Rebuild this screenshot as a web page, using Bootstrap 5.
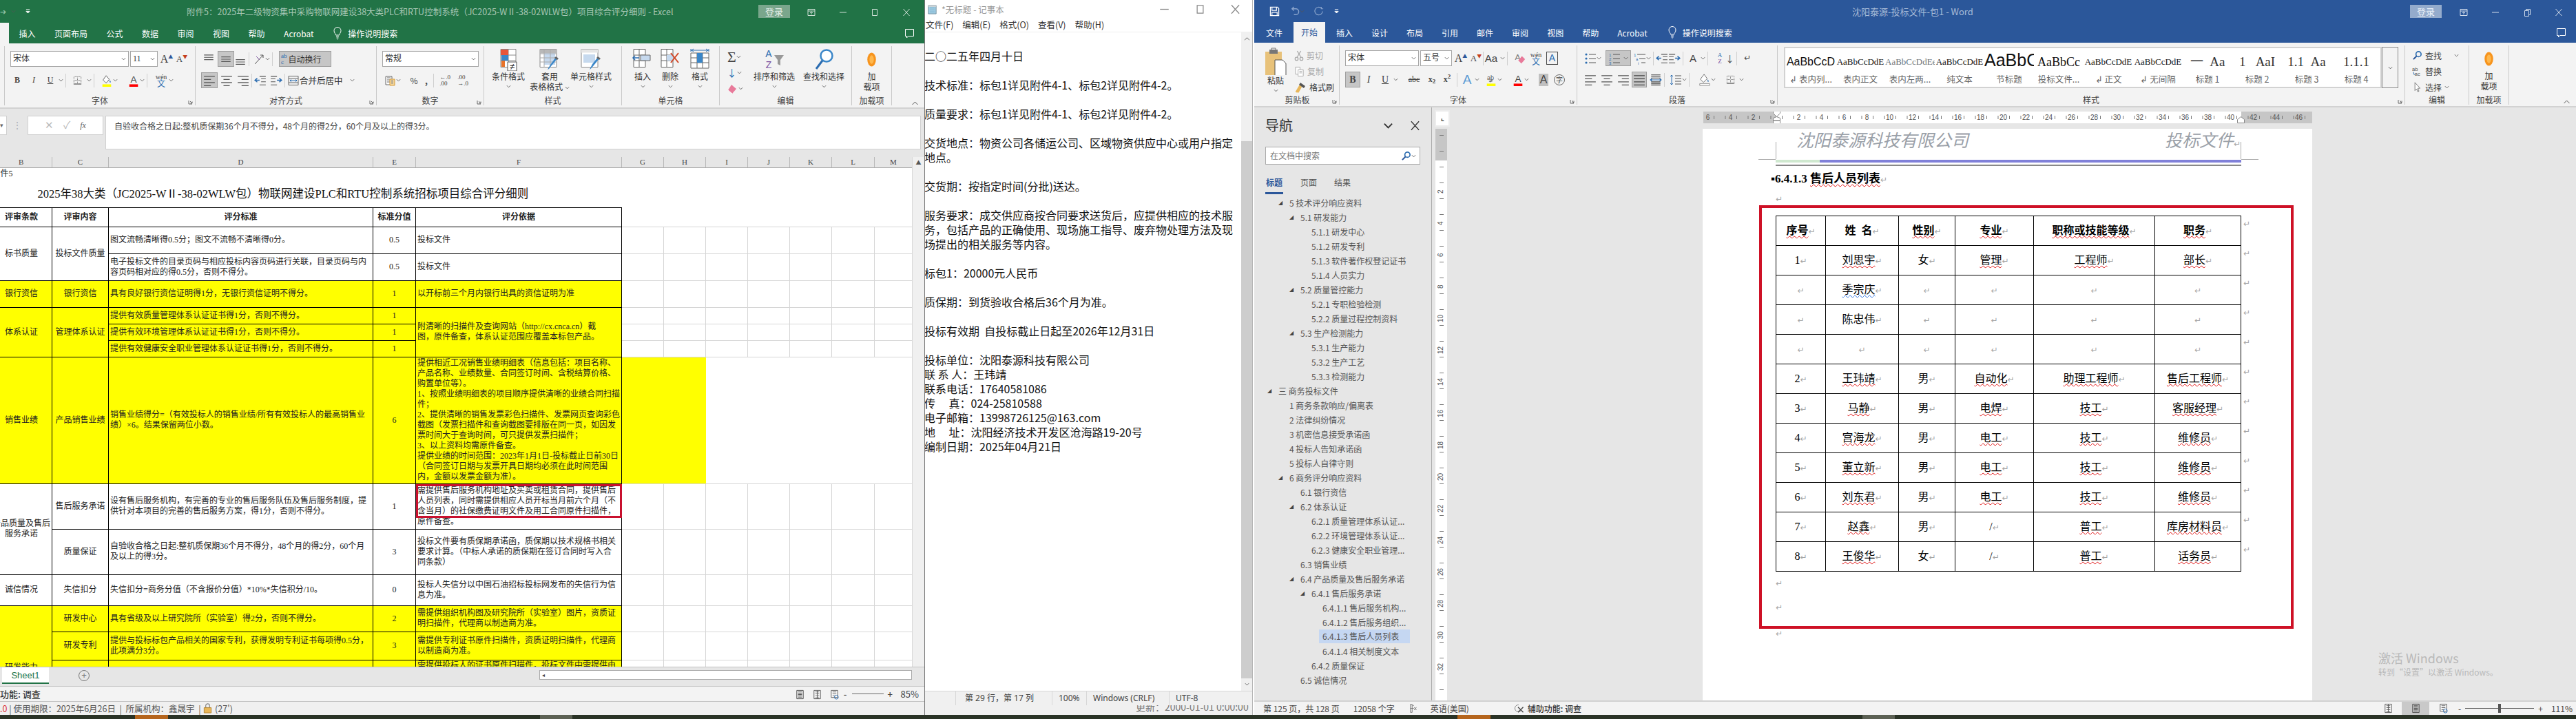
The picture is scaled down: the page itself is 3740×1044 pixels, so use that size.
<!doctype html>
<html lang="zh-CN">
<head>
<meta charset="utf-8">
<title>Excel, Notepad and Word</title>
<link href="https://cdn.jsdelivr.net/npm/bootstrap@5.3.0/dist/css/bootstrap.min.css" rel="stylesheet">
<style>
html,body{margin:0;width:3740px;height:1044px;overflow:hidden;background:#fff}
body{font-family:"Noto Sans CJK SC","Noto Sans",sans-serif;font-size:12px;line-height:15px;color:#444}
.screen{width:3740px;height:1044px;position:relative}
.wins{height:1038px}
.tbar{height:6px;background:#2a3326}
.tb-o{background:#b5651d;width:48px}.tb-g{background:#5c6154;width:47px}
.m196{margin-left:196px}.m540{margin-left:540px}.m1285{margin-left:1285px}
.xl{width:1342px;flex:none;overflow:hidden}
.np{width:477px;flex:none;border-left:1px solid #777;border-right:1px solid #b5b5b5;background:#f0f0f0}
.wd{width:1919px;flex:none;margin-left:2px;overflow:hidden;background:#e6e6e6}
.xttl,.xtab{background:#217346;color:#fff}
.wttl,.wtab{background:#2b579a;color:#fff}
.xttl{height:33px}.xtab{height:30px}
.wttl{height:32px}.wtab{height:30px}
.ttl-t{font-size:12.5px;white-space:nowrap}
.xttl .ttl-t{color:#a7c7b5;width:702px;margin-left:227px}
.wttl .ttl-t{color:#a8bcd8;width:178px;margin-left:745px;font-size:13px}
.login{width:46px;height:19px;line-height:19px;text-align:center;font-size:13px}
.xttl .login{background:#7aa68c;color:#e6f0ea;margin-left:128px}
.wttl .login{background:#94abcc;color:#eef3fa;margin-left:632px}
.ctrl{width:46px;text-align:center}
.ctrl svg{width:12px;height:12px;color:#cfe0d6}
.wttl .ctrl svg{color:#d4deec}
.xarr{color:#8fc1a5;width:8px;font-size:11px;line-height:11px}
.xcr{color:#8fc1a5}.wcr{color:#8aa4cc}
.xt-row{gap:27.5px;height:100%;align-items:center;padding-left:13px}
.xon{width:13px;height:100%;background:#f3f3f3;margin-right:-13px;margin-left:-13px}
.wt-row{gap:27px;height:100%;align-items:center;padding-left:17px}
.won{background:#f3f3f3;color:#2b579a;margin:0 -11px;padding:0 11px;height:100%;line-height:30px}
.bulb{width:14px;height:20px}
.cmt{width:15px;height:15px;color:#fff}
.cmt-x{margin-left:auto;margin-right:14px}
.rb{height:95px;background:#f3f3f3;padding-top:4px;border-bottom:2px solid #d2d2d2;flex:none}
.wrb{height:94px}
.rg{display:flex;flex-direction:column;border-right:1px solid #c9c9c9;height:86px;flex:none}
.rb-b{flex:1;padding-top:7px;min-height:0}
.rb-t{padding-top:3px}
.rb-c{flex:1;padding-top:3px;min-height:0;display:flex}
.rb-l{height:14px;line-height:14px;text-align:center;color:#444;position:relative}
.rw{display:flex;align-items:center;height:23px}
.rw+.rw{margin-top:8px}
.box{height:23px;border:1px solid #a6a6a6;background:#fff;display:flex;align-items:center;justify-content:space-between;padding:0 3px;color:#333}
.wrap-on{padding:0 2px;gap:2px;justify-content:flex-start}
.ib{display:flex;align-items:center;justify-content:center;height:23px;color:#444;flex:none}
.hl{background:#c6c6c6;border:1px solid #9e9e9e}
.cr{width:7px;height:7px;color:#555;flex:none}
.i14{width:15px;height:15px;flex:none}.i16{width:18px;height:18px;flex:none}.i16n{width:14px;height:18px;flex:none}
.i32{width:34px;height:33px;flex:none}
.bb{display:flex;flex-direction:column;align-items:center;text-align:center;line-height:15px;color:#333;flex:none;white-space:nowrap}
.bb svg.cr{margin-top:4px}
.bb svg.cr0{margin-top:0}
.w7{width:7px}.w14{width:14px}.w16{width:16px}.w22{width:22px}.w24{width:24px}.w26{width:26px}.w30{width:30px}.w34{width:34px}.w37{width:37px}.w38{width:38px}.w40{width:40px}.w46{width:46px}.w60{width:60px}.w72{width:72px}.w76{width:76px}.w107{width:107px}.w140{width:140px}.w172{width:172px}
.ml2{margin-left:2px}.ml3{margin-left:3px}.ml4{margin-left:4px}.ml5{margin-left:5px}.ml6{margin-left:6px}.ml7{margin-left:7px}.ml8{margin-left:8px}.ml9{margin-left:9px}.ml10{margin-left:10px}.ml12{margin-left:12px}.ml13{margin-left:13px}.ml14{margin-left:14px}.ml18{margin-left:18px}.ml19{margin-left:19px}.ml20{margin-left:20px}.ml22{margin-left:22px}.ml66{margin-left:66px}
.vs{width:1px;height:20px;background:#cfcfcf;flex:none;margin:0 3px}
.serif{font-family:"Liberation Serif","Noto Sans CJK SC",serif}
.biga{font-family:"Liberation Serif",serif;font-size:16px;color:#444;line-height:20px}
.sma{font-family:"Liberation Serif",serif;font-size:13px;color:#444;line-height:20px}
.tri{color:#2b579a;font-size:7px;line-height:8px;align-self:flex-start;margin-top:4px}
.triv{color:#c43e1c}
.launch{position:absolute;right:2px;bottom:1px;width:8px;height:8px;color:#666}
.stk10{font-size:10px;line-height:10px;flex-direction:column}
.stk9{font-size:9px;line-height:9px;flex-direction:column}
.wz{color:#2b6cb0;font-size:12px}
.abc9{font-size:9px;line-height:9px;color:#2b6cb0}
.sg{font-size:22px;height:24px;font-family:"Liberation Serif",serif}
.dnb{color:#2b6cb0;font-size:14px}
.h33{height:33px}
.sa15{font-size:15px;font-family:"Liberation Sans",sans-serif}
.sa19{font-size:19px;color:#5b9bd5;font-family:"Liberation Sans",sans-serif}
.f14{font-size:14px}
.abox{width:17px;height:19px;border:1px solid #444;font-size:14px;font-family:"Liberation Sans",sans-serif;color:#2b6cb0}
.ga{background:#c0c0c0;width:14px;font-size:16px;height:18px;font-family:"Liberation Sans",sans-serif}
.zi{width:16px;height:16px;border:1px solid #666;border-radius:50%;font-size:10px}
.blu{color:#2b6cb0}.pur{color:#7a4fa0}
.dj{font-family:"DejaVu Sans",sans-serif}
.ar13{color:#444;font-size:13px}
.mute{color:#aaa}.dark{color:#333}
.psti{width:32px;height:46px}.pstl{margin-top:-6px;background:#f3f3f3;width:38px}
.xg0{width:7px}.xg1{width:277px}.xg2{width:263px}.xg3{width:156px}.xg4{width:200px}.xg5{width:142px}.xg6{width:192px}.xg7{width:58px}
.wg0{width:2px;border:0}.wg1{width:122px}.wg2{width:345px}.wg3{width:291px}.wg4{width:911px}.wg5{width:93px}.wg6{width:58px}
.coll{margin-left:auto;margin-right:8px;align-self:flex-end;margin-bottom:2px;width:11px;height:8px;color:#555}
.fbar{height:70px;background:#e6e6e6;padding-top:10px;flex:none}
.nmb{width:10px;height:28px;background:#fff;border:1px solid #d0d0d0;border-left:0;font-size:9px;color:#666;line-height:26px}
.fx3{width:110px;height:28px;background:#fff;border:1px solid #d0d0d0;color:#bbb;font-size:15px;gap:14px;font-family:"Liberation Serif",serif}
.fxi{color:#666;font-size:12px}
.fin{width:1184px;height:49px;background:#fff;border:1px solid #d0d0d0;margin-left:3px;padding:6px 12px;color:#444}
.dots{width:30px;color:#aaa;text-align:center;line-height:26px;flex:none}
.sheet{height:740px;flex:none;position:relative}
.grid{width:1324px;height:740px;overflow:hidden;position:relative;flex:none}
.gt{table-layout:fixed;width:1338px;margin-left:-14px;font-family:"Liberation Serif","Noto Sans CJK SC",serif;font-size:12px;line-height:15px;color:#222}
.gt td,.gt th{padding:0 2px;white-space:nowrap;overflow:hidden;font-weight:400}
.c89{width:89px}.c82{width:82px}.c384{width:384px}.c62{width:62px}.c299{width:299px}.c61{width:61px}.c55{width:55px}
.ch th{height:15px;background:#e6e6e6;text-align:center;border-right:1px solid #b8b8b8;border-bottom:1px solid #aaa;font-family:"Liberation Serif",serif;font-size:11px;line-height:14px;color:#444}
.bd td{border:1px solid #000;vertical-align:middle}
.bd td.g{border:0;border-top:1px solid #d6d6d6;border-bottom:1px solid #d6d6d6;border-right:1px solid #d6d6d6;background:#fff}
.bd td.z{border:0;background:#fff}
.bd td.gy{border:0;background:#ff0}
.ctr{text-align:center}
.yc{background:#ff0}
.hd td{font-weight:700;text-align:center}
.h19{height:19px}.h39{height:39px}.h28{height:28px}.h45{height:45px}.h24{height:24px}.h184{height:184px}.h66{height:66px}.h38{height:38px}.h41{height:41px}.h56{height:56px}
.ttlc{font-size:16.5px;padding-left:68px!important;color:#111}
.redx{position:absolute;left:604px;top:475px;width:299px;height:49px;border:3px solid #c8102e;z-index:2}
.vsb{width:18px;background:#f0f0f0;border-left:1px solid #d8d8d8;flex:none;text-align:center;color:#555;font-size:8px}
.stabs{height:28px;background:#e6e6e6;border-top:1px solid #c2c2c2;flex:none}
.sh1{width:68px;margin-left:3px;background:#fff;color:#217346;text-align:center;font-size:13px;height:24px;line-height:23px;border-bottom:2px solid #217346;font-family:"Liberation Sans",sans-serif}
.plus{width:16px;height:16px;border:1px solid #777;border-radius:50%;margin-left:43px;color:#777;font-size:13px;line-height:13px;text-align:center;font-family:"Liberation Sans",sans-serif}
.hs{width:541px;height:14px;border:1px solid #aaa;background:#fff;margin-left:auto;margin-right:18px;font-size:8px;line-height:12px;color:#444;padding-left:3px}
.xst{height:22px;background:#f3f3f3;border-top:1px solid #c2c2c2;font-size:13px;flex:none;line-height:20px;color:#333;font-weight:500}
.xst2{height:20px;background:#f0f0f0;border-top:1px solid #c2c2c2;flex:none;line-height:18px;font-size:12.5px;color:#555;white-space:pre}
.red{color:#d33}
.vi{width:25px;text-align:center;color:#555}
.slid{width:46px;height:1px;background:#666;position:relative;margin:0 6px}
.pct{margin:0 8px 0 12px;font-weight:400;color:#444}
.npt{height:26px;background:#fff;color:#999;font-size:12.5px;flex:none}
.npi{margin:0 6px 0 3px}
.npm{height:21px;background:#fff;color:#333;flex:none;padding-left:1px;gap:13px;font-size:12.5px;border-bottom:1px solid #f0f0f0;line-height:20px}
.npctl{margin-left:auto;width:135px;color:#888;padding-right:17px}
.npb{flex:1;min-height:0;background:#fff}
.npx{width:459px;flex:none;overflow:hidden}
.npx pre{margin:3px 0 0 -1px;padding:0;font-family:"Noto Sans CJK SC","Noto Sans",sans-serif;font-size:16px;line-height:21px;color:#111;overflow:hidden;white-space:pre}
.nsb{width:16px;background:#f0f0f0;flex:none}
.nsb-u{height:158px;text-align:center;padding-top:6px}
.nsb-t{flex:1;background:#cdcdcd}
.nsb-d{height:18px;text-align:center;padding-top:5px}
.nsb svg{width:9px;height:7px;color:#555;display:block;margin:0 auto}
.nps{height:21px;background:#f0f0f0;border-top:1px solid #d7d7d7;flex:none;color:#444;line-height:20px}
.nps>span{height:100%;border-left:1px solid #d7d7d7;padding-left:9px;font-family:"Noto Sans","Noto Sans CJK SC",sans-serif}
.n1{margin-left:44px;width:140px;padding-left:13px!important}.n2{width:50px}.n3{width:120px}.n4{width:100px}
.npu{height:14px;overflow:hidden;background:#f0f0f0;color:#777;font-size:14px;line-height:14px;white-space:pre;padding-left:306px}
.npu span{display:block;margin-top:-5px}
.wmain{flex:1;min-height:0}
.pane{width:258px;flex:none;background:#e6e6e6;border-right:1px solid #a9a9a9;padding-left:16px;overflow:hidden}
.ptitle{height:34px;font-size:20px;line-height:34px;color:#333;padding-top:9px;box-sizing:content-box;width:225px}
.psearch{width:225px;height:26px;border:1px solid #aaa;background:#fff;margin-top:14px;padding:0 5px 0 6px;color:#777;line-height:24px}
.ptabs{gap:25px;margin-top:16px;height:25px;color:#555;font-size:12px;line-height:19px}
.pon{color:#2b579a;font-weight:700;border-bottom:3px solid #2b579a;height:27px;padding:0 1px}
.tree{margin:4px 0 0 -16px;color:#555;white-space:nowrap}
.tn{height:21px;line-height:21px;display:flex}
.tg{width:16px;flex:none;font-size:8px;color:#444;font-family:"DejaVu Sans",sans-serif}
.l0{padding-left:19px}.l1{padding-left:35px}.l2{padding-left:51px}.l3{padding-left:67px}.l4{padding-left:83px}
.nsel{background:#c5d7f2;width:132px;margin-left:-5px;padding-left:5px;height:20px;line-height:20px}
.dmain{flex:1;min-width:0;display:flex;flex-direction:column}
.rstrip{height:31px;flex:none;padding-top:4px}
.cbox{width:22px;height:24px;margin-left:4px;border:2px solid #ececec;background:#fff;color:#444;font-size:10px;line-height:18px;text-align:center;font-weight:700;flex:none}
.hrul{width:884px;height:17px;margin-left:368px;margin-top:2px;overflow:hidden;display:flex;flex:none;position:relative;font-family:"Liberation Sans",sans-serif;font-size:10px;line-height:17px;color:#555;
 background:linear-gradient(90deg,#777 1px,transparent 1px) 15px 6px/16.5px 5px repeat-x,linear-gradient(90deg,#c6c6c6 107px,#fff 107px,#fff 781px,#c6c6c6 781px)}
.hrul span{width:33px;flex:none;text-align:center}
.hrul span:first-of-type{margin-left:-43px}
.indm{position:absolute;left:101px;top:-1px;width:11px;height:19px;color:#888;z-index:2}
.indr{position:absolute;left:775px;top:7px;width:11px;height:10px;color:#888;z-index:2}
.dbody{flex:1;min-height:0}
.vrul{width:17px;margin-left:5px;flex:none;overflow:hidden;font-family:"Liberation Sans",sans-serif;font-size:10px;color:#555;padding-top:22px;
 background:linear-gradient(#777 1px,transparent 1px) 5.5px 9px/6px 23px repeat-y,linear-gradient(#c6c6c6 46px,#fff 46px)}
.vrul span{display:flex;align-items:center;justify-content:center;height:46px;writing-mode:vertical-rl;transform:rotate(180deg)}
.page{width:885px;margin-left:371px;background:#fff;flex:none;overflow:hidden;padding-left:106px;padding-right:103px;font-family:"Liberation Serif","Noto Sans CJK SC",serif;color:#000}
.phd{height:44px;position:relative;display:flex;justify-content:space-between;padding:3px 0 0 30px;font-size:25px;line-height:30px;font-style:italic;font-weight:400;color:#9aa0a8;
 background:linear-gradient(#aaa,#aaa) 0 19px/1px 25px no-repeat,linear-gradient(#aaa,#aaa) 100% 19px/1px 25px no-repeat}
.phd::before,.phd::after{content:"";position:absolute;top:44px;height:1px;width:25px;background:#aaa}
.phd::before{left:-25px}.phd::after{right:-25px}
.phr{padding-right:1px}
.phb{height:4px;margin-top:1px;display:flex}
.phb i{display:block}.phb .g1{width:64px;background:#cfe8cf}.phb .g2{flex:1;background:#8080d8}
.phl{height:2px;background:#888;margin-top:3px}
.hh{font-size:17px;font-weight:700;line-height:24px;margin:7px 0 0 -7px;white-space:nowrap;font-family:"Liberation Serif","Noto Sans CJK SC",serif}
.pm{font-family:"DejaVu Sans",sans-serif;font-style:normal;font-weight:400;color:#a6a6a6;font-size:12px}
.pml{height:12px;line-height:12px;margin-top:10px}
.rbx{width:776px;margin-left:-24px;height:615px;border:4px solid #ce1126;padding:11px 0 0 20px;margin-top:3px;flex:none}
.wt{table-layout:fixed;width:691px;font-size:16px;line-height:20px;text-align:center}
.wt td{height:43px;padding:0;border:1px solid #000;vertical-align:middle;white-space:nowrap;overflow:hidden}
.wt td.mk{border:0;text-align:left;vertical-align:top;padding:3px 0 0 3px;line-height:14px}
.wt tr.hb td:not(.mk){font-weight:700}
.d72{width:72px}.d106{width:106px}.d82{width:82px}.d114{width:114px}.d176{width:176px}.d125{width:125px}.d16{width:16px}
.sq{text-decoration:underline wavy #e01010 1px;text-underline-offset:2px}
.sb{text-decoration:underline wavy #2a6fe0 1px;text-underline-offset:2px}
.bl{height:35px;line-height:35px}
.lst{height:15px;line-height:15px}
.wst{height:21px;background:#f3f3f3;border-top:2px solid #d2d2d2;flex:none;line-height:19px;color:#444;white-space:nowrap}
.wacc{color:#333;font-weight:500}
.wpc{margin:0 5px 0 12px}
.wlm{position:absolute;left:3453px;top:944px;color:#b9b9b9;z-index:3;line-height:20px;white-space:nowrap}
.wlm b{display:block;font-weight:400;font-size:18px;line-height:22px}
.gal{width:868px;height:60px;margin:2px 0 0 9px;background:#fff;border:2px solid #d2d2d2;display:flex;overflow:hidden;padding-left:1px}
.gm{width:24px;height:60px;border:1px solid #8a8a8a;margin-top:2px;background:#f3f3f3;text-align:center;line-height:56px;flex:none}
.gi{width:72px;flex:none;text-align:center;overflow:hidden;white-space:nowrap}
.gs{height:34px;line-height:40px;font-family:"Liberation Sans",sans-serif;font-size:16px;color:#111;overflow:hidden}
.gl{height:22px;line-height:22px;color:#666;font-size:12.5px}
.s13{font-family:"Liberation Serif",serif;font-size:13px}
.s24{font-family:"Liberation Sans",sans-serif;font-size:25px;line-height:34px}
.s20{font-family:"Liberation Serif",serif;font-size:19px;color:#333}
.s18{font-family:"Liberation Serif",serif;font-size:18px}
.lb{color:#333;font-size:12.5px;white-space:nowrap}
.sld2{width:100px;height:1px;background:#555;position:relative;margin:0 6px}
.sld2 i{position:absolute;left:48px;top:-6px;width:4px;height:13px;background:#555}
.vsel{background:#c9c9c9;width:40px;height:19px;display:flex;align-items:center;justify-content:center}
</style>
</head>
<body>
<svg class="d-none" xmlns="http://www.w3.org/2000/svg">
<symbol id="cr" viewBox="0 0 8 8"><path d="M1 2.500 4 5.500 7 2.500" fill="none" stroke="currentColor" stroke-width="1"/></symbol>
<symbol id="up" viewBox="0 0 10 8"><path d="M1 6 5 2 9 6" fill="none" stroke="currentColor"/></symbol>
<symbol id="min" viewBox="0 0 12 12"><path d="M1 6h10" stroke="currentColor"/></symbol>
<symbol id="max" viewBox="0 0 12 12"><path d="M2.500 1.500h7v9h-7z" fill="none" stroke="currentColor"/></symbol>
<symbol id="rst" viewBox="0 0 12 12"><path d="M2.500 3.500h6v8h-6zM4.500 3.500v-2h6v8h-2" fill="none" stroke="currentColor"/></symbol>
<symbol id="cls" viewBox="0 0 12 12"><path d="M1.500 1 10.500 11M10.500 1 1.500 11" stroke="currentColor" fill="none"/></symbol>
<symbol id="opt" viewBox="0 0 12 12"><path d="M1 1.500h10v9H1zM1 4h10M6 9V5.500M4 7l2-2 2 2" fill="none" stroke="currentColor"/></symbol>
<symbol id="blb" viewBox="0 0 14 20"><path d="M4.500 13c0-2-2.500-3-2.500-6.500a5 5 0 0 1 10 0c0 3.500-2.500 4.500-2.500 6.500zM5 15h4M5.500 17h3M6.500 19h1" fill="none" stroke="#fff"/></symbol>
<symbol id="cmt" viewBox="0 0 15 15"><path d="M1.500 1.500h12v10h-8l-2 2.500v-2.500h-2z" fill="none" stroke="currentColor"/></symbol>
<symbol id="lc" viewBox="0 0 8 8"><path d="M1 2v5h5M3 3l3 3M6 3.500V6H3.500" fill="none" stroke="currentColor"/></symbol>
<symbol id="vt" viewBox="0 0 16 16"><path d="M2 2.500h12M2 5.500h12M2 8.500h12" stroke="#555"/></symbol>
<symbol id="vm" viewBox="0 0 16 16"><path d="M2 5h12M2 8h12M2 11h12" stroke="#555"/></symbol>
<symbol id="vb" viewBox="0 0 16 16"><path d="M2 8.500h12M2 11.500h12M2 14.500h12" stroke="#555"/></symbol>
<symbol id="al" viewBox="0 0 16 16"><path d="M1 2.500h14M1 6.500h9M1 10.500h14M1 14.500h9" stroke="#555"/></symbol>
<symbol id="ac" viewBox="0 0 16 16"><path d="M1 2.500h14M4 6.500h8M1 10.500h14M4 14.500h8" stroke="#555"/></symbol>
<symbol id="ar" viewBox="0 0 16 16"><path d="M1 2.500h14M6 6.500h9M1 10.500h14M6 14.500h9" stroke="#555"/></symbol>
<symbol id="aj" viewBox="0 0 16 16"><path d="M1 2.500h14M1 6.500h14M1 10.500h14M1 14.500h14" stroke="#444"/></symbol>
<symbol id="ad" viewBox="0 0 16 16"><path d="M2 1.500h12M2 3.500h12M2 5.500h12M2 10.500h12M2 12.500h12M2 14.500h12" stroke="#444"/><path d="M1 8h14M3 6.500 1 8l2 1.500M13 6.500 15 8l-2 1.500" stroke="#2b6cb0" fill="none"/></symbol>
<symbol id="od" viewBox="0 0 16 16"><path d="M7 2.500h8M9 5.500h6M9 9.500h6M7 13.500h8" stroke="#555"/><path d="M7 7.500H1M4 5 1 7.500 4 10" stroke="#2b6cb0" fill="none" stroke-width="1.300"/></symbol>
<symbol id="oi" viewBox="0 0 16 16"><path d="M1 2.500h8M1 5.500h6M1 9.500h6M1 13.500h8" stroke="#555"/><path d="M9 7.500h6M12 5l3 2.500L12 10" stroke="#2b6cb0" fill="none" stroke-width="1.300"/></symbol>
<symbol id="ori" viewBox="0 0 18 18"><path d="M3 16 15 3M11 3h4v4" stroke="#555" fill="none"/><path d="M5 5l5 5" stroke="#7a4fa0"/></symbol>
<symbol id="mrg" viewBox="0 0 18 18"><path d="M2 2.500h14v13H2zM2 6h14M2 12h14" fill="none" stroke="#666"/><path d="M4 9h10M6 7.500 4 9l2 1.500M12 7.500 14 9l-2 1.500" fill="none" stroke="#2b6cb0"/></symbol>
<symbol id="brd" viewBox="0 0 16 16"><path d="M2.500 2.500h11v11h-11zM8 2.500v11M2.500 8h11" fill="none" stroke="#666" stroke-dasharray="1 1"/><path d="M2 14h12" stroke="#555"/></symbol>
<symbol id="fil" viewBox="0 0 18 20"><path d="M8 2 3 9l5 5 5-6z" fill="#fff" stroke="#555"/><path d="M14 9c1 2 2 3 1 4s-2-1-1-4" fill="#2b6cb0"/><path d="M2 16h14v4H2z" fill="#ff0"/></symbol>
<symbol id="fca" viewBox="0 0 18 20"><text x="9" y="13" text-anchor="middle" font-family="Liberation Sans" font-size="15" fill="#444">A</text><path d="M2 16h14v4H2z" fill="#f00"/></symbol>
<symbol id="hla" viewBox="0 0 18 20"><text x="8" y="10" text-anchor="middle" font-family="Liberation Sans" font-size="10" fill="#555">ab</text><path d="M5 12l5-2 2 2-5 2z" fill="#777"/><path d="M2 16h14v4H2z" fill="#ff0"/></symbol>
<symbol id="acc" viewBox="0 0 18 18"><path d="M3 3h9v12H3zM5 5h5M5 8h5M5 11h5" fill="#fff" stroke="#666"/><path d="M9 7h7v9H9z" fill="#f8d89a" stroke="#d39a3a"/><path d="M11 9h3M11 11h3M11 13h3" stroke="#888"/></symbol>
<symbol id="cfm" viewBox="0 0 34 33"><path d="M6 1.500h22v26H6zM6 10h22M6 18h22M17 1.500v26" fill="#fff" stroke="#888"/><path d="M6 2h11v8H6z" fill="#e7563a"/><path d="M7 10h10v8H7z" fill="#3a86c8"/><path d="M7 18h5v9H7z" fill="#e8732a"/><path d="M16 20h13v13H16z" fill="#fff" stroke="#555"/><text x="22.500" y="31" text-anchor="middle" font-size="13" font-family="Liberation Sans" fill="#222">≠</text></symbol>
<symbol id="tfm" viewBox="0 0 34 33"><path d="M3 1.500h24v26H3z" fill="#fff" stroke="#888"/><path d="M3 1.500h24v6H3z" fill="#b8b8b8"/><path d="M9 7h16v17H9z" fill="#c6d9ee"/><path d="M3 8h24M3 14h24M3 20h24M9 1.500v26M18 1.500v26" fill="none" stroke="#aaa"/><path d="M29 14 20 25c-2 2-4 6-6 6l4-7 8-11z" fill="#3a86c8"/><path d="M26 12l4 3-2 2-4-3z" fill="#666"/></symbol>
<symbol id="csm" viewBox="0 0 34 33"><path d="M3 1.500h24v26H3z" fill="#fff" stroke="#888"/><path d="M3 1.500h24v5H3z" fill="#e6e6e6"/><path d="M6 9h17v12H6z" fill="#c6d9ee"/><path d="M30 14 21 25c-2 2-4 5-6 6l4-8 8-10z" fill="#3a86c8"/><path d="M27 12l4 3-2 2-4-3z" fill="#666"/></symbol>
<symbol id="cin" viewBox="0 0 34 33"><path d="M4 1.500h17v26H4zM4 10h17M4 18h17M12 1.500v26" fill="#fff" stroke="#666"/><path d="M14 10h14v8H14z" fill="#c6d9ee" stroke="#666"/><path d="M12 14H3M6 11 3 14l3 3" fill="none" stroke="#2b6cb0" stroke-width="1.500"/></symbol>
<symbol id="cdl" viewBox="0 0 34 33"><path d="M4 1.500h17v26H4zM4 10h17M4 18h17M12 1.500v26" fill="#fff" stroke="#666"/><path d="M12 10h9v8h-9z" fill="#c6d9ee"/><path d="M18 7l11 14M29 7 18 21" stroke="#d24726" stroke-width="2"/></symbol>
<symbol id="cft" viewBox="0 0 34 33"><path d="M4 7h26v22H4zM4 14h26M4 21h26M13 7v22M21 7v22" fill="#fff" stroke="#666"/><path d="M13 7h8v14h-8z" fill="#3a86c8"/><path d="M4 3h26M4 1v4M30 1v4M8 1 5 3l3 2M26 1l3 2-3 2" fill="none" stroke="#2b6cb0"/></symbol>
<symbol id="srt" viewBox="0 0 34 33"><text x="9" y="13" text-anchor="middle" font-family="Liberation Sans" font-size="14" fill="#2b6cb0">A</text><text x="9" y="29" text-anchor="middle" font-family="Liberation Sans" font-size="14" fill="#7a4fa0">Z</text><path d="M17 10h14l-5 7v8l-4-2v-6z" fill="#999"/></symbol>
<symbol id="fnd" viewBox="0 0 34 33"><circle cx="21" cy="11" r="8.500" fill="#fff" stroke="#3a86c8" stroke-width="2.500"/><path d="M15 18 6 30" stroke="#2b6cb0" stroke-width="3"/></symbol>
<symbol id="mag" viewBox="0 0 16 16"><circle cx="10" cy="6" r="4" fill="none" stroke="#2b6cb0" stroke-width="1.800"/><path d="M7 9 2 14" stroke="#2b579a" stroke-width="2.200"/></symbol>
<symbol id="dot" viewBox="0 0 12 20"><ellipse cx="6" cy="10" rx="5" ry="8" fill="#f7941d"/><ellipse cx="6" cy="10" rx="2.500" ry="5" fill="#ffb84d"/></symbol>
<symbol id="sav" viewBox="0 0 16 16"><path d="M1.500 1.500h11l2 2v11h-13zM4 1.500v5h7v-5M4 14.500v-5h8v5" fill="none" stroke="#fff" stroke-width="1.300"/></symbol>
<symbol id="und" viewBox="0 0 16 16"><path d="M4 4h6a4 4 0 0 1 0 9H7M7 1 4 4l3 3" fill="none" stroke="#8aa4cc" stroke-width="1.500"/></symbol>
<symbol id="red" viewBox="0 0 16 16"><path d="M11 3a6 6 0 1 0 2 5M11 1v3h3" fill="none" stroke="#8aa4cc" stroke-width="1.300"/></symbol>
<symbol id="qat" viewBox="0 0 8 10"><path d="M1 2h6M1 5l3 3 3-3z" stroke="#fff" fill="#fff"/></symbol>
<symbol id="pst" viewBox="0 0 32 46"><path d="M1 6h24v36H1z" fill="#e8c27a"/><path d="M7 3h12v6H7z" fill="#777"/><path d="M10 1h6v4h-6z" fill="none" stroke="#777"/><path d="M15 18h11l5 5v23H15z" fill="#fff" stroke="#555"/></symbol>
<symbol id="cut" viewBox="0 0 16 18"><path d="M5 1l6 10M11 1 5 11" stroke="#aaa" stroke-width="1.500"/><circle cx="4" cy="14" r="2.500" fill="none" stroke="#aaa" stroke-width="1.500"/><circle cx="12" cy="14" r="2.500" fill="none" stroke="#aaa" stroke-width="1.500"/></symbol>
<symbol id="cpy" viewBox="0 0 16 16"><path d="M2 1.500h7v11H2z" fill="#fff" stroke="#aaa"/><path d="M6 5.500h8v10H6zM8 8h4M8 10.500h4" fill="#fff" stroke="#aaa"/></symbol>
<symbol id="fmp" viewBox="0 0 18 18"><path d="M9 6 3 16M10 7l-5 9" stroke="#e8b75a" stroke-width="3"/><path d="M9 2l7 5-2 3-7-5z" fill="#555"/></symbol>
<symbol id="era" viewBox="0 0 18 18"><path d="M8 3l7 6-6 7-6-5z" fill="#e87a9a"/><path d="M3 11l6 5" stroke="#fff"/></symbol>
<symbol id="cla" viewBox="0 0 20 20"><text x="6" y="12" font-family="Liberation Sans" font-size="13" fill="#777" text-anchor="middle">A</text><path d="M13 6l5 5-6 7-5-5z" fill="#e87a9a"/></symbol>
<symbol id="lst1" viewBox="0 0 18 18"><circle cx="3" cy="3" r="1.600" fill="#2b6cb0"/><circle cx="3" cy="9" r="1.600" fill="#2b6cb0"/><circle cx="3" cy="15" r="1.600" fill="#2b6cb0"/><path d="M7 3h10M7 9h10M7 15h10" stroke="#555"/></symbol>
<symbol id="lst2" viewBox="0 0 18 18"><text x="1" y="6" font-size="6" font-family="Liberation Sans" fill="#2b6cb0">1</text><text x="1" y="12" font-size="6" font-family="Liberation Sans" fill="#2b6cb0">2</text><text x="1" y="18" font-size="6" font-family="Liberation Sans" fill="#2b6cb0">3</text><path d="M7 3h10M7 9h10M7 15h10" stroke="#555"/></symbol>
<symbol id="lst3" viewBox="0 0 18 18"><text x="0" y="6" font-size="6" font-family="Liberation Sans" fill="#2b6cb0">1</text><text x="3" y="12" font-size="6" font-family="Liberation Sans" fill="#2b6cb0">a</text><text x="6" y="18" font-size="6" font-family="Liberation Sans" fill="#2b6cb0">i</text><path d="M5 3h12M8 9h9M11 15h6" stroke="#555"/></symbol>
<symbol id="spc" viewBox="0 0 18 18"><path d="M3 2v14M1 4l2-2 2 2M1 14l2 2 2-2" fill="none" stroke="#2b6cb0"/><path d="M8 3h9M8 7h9M8 11h9M8 15h9" stroke="#555"/></symbol>
<symbol id="shd" viewBox="0 0 20 20"><path d="M9 1 3 9l5 5 6-6z" fill="#fff" stroke="#666"/><path d="M15 9c1 2 2 3 1 4s-2-1-1-4" fill="#2b6cb0"/><path d="M2 16h16v3H2z" fill="#fff" stroke="#888"/></symbol>
<symbol id="ptr" viewBox="0 0 12 18"><path d="M2 1v14l3-3 2 5 2-1-2-5h4z" fill="#fff" stroke="#666"/></symbol>
<symbol id="rp" viewBox="0 0 16 16"><text x="0" y="7" font-size="8" font-family="Liberation Sans" fill="#555">ab</text><text x="4" y="15" font-size="8" font-family="Liberation Sans" fill="#555">ac</text><path d="M2 9l1 4 3-1" fill="none" stroke="#2b6cb0"/></symbol>
<symbol id="vw1" viewBox="0 0 16 16"><path d="M3 1.500h10v13H3z" fill="#fff" stroke="#555"/><path d="M8 2v12M5 4h6M5 7h6M5 10h6M5 13h6" stroke="#555"/></symbol>
<symbol id="vw2" viewBox="0 0 16 16"><path d="M3 1.500h10v13H3zM5 4h6M5 6h6M5 8h6M5 10h6M5 12h6" fill="none" stroke="#444"/></symbol>
<symbol id="vw3" viewBox="0 0 16 16"><path d="M3 1.500h10v11H3zM5 4h6M5 7h6M5 10h4" fill="#fff" stroke="#555"/><circle cx="11" cy="12" r="3" fill="none" stroke="#2b6cb0"/></symbol>
<symbol id="lok" viewBox="0 0 14 16"><path d="M4 7V4a3 3 0 0 1 6 0v3" fill="none" stroke="#888" stroke-width="1.300"/><path d="M1.500 7h11v8h-11z" fill="#e8b75a" stroke="#b0812e"/></symbol>
<symbol id="npd" viewBox="0 0 16 16"><path d="M2 2h12v13H2z" fill="#a6d2e8" stroke="#6a8a9a"/><path d="M2 2h12v2H2z" fill="#d5d5d5"/><path d="M4 6h8M4 9h8M4 12h8" stroke="#6aa0bc"/></symbol>
<symbol id="hg" viewBox="0 0 11 19"><path d="M.5.500h10v3L5.500 8.500.5 3.500zM.5 14v-3.500l5-2 5 2V14zM.5 14h10v4.500H.500z" fill="#fff" stroke="currentColor"/></symbol>
<symbol id="rt" viewBox="0 0 11 10"><path d="M.5 4.500l5-4 5 4v5H.500z" fill="#fff" stroke="currentColor"/></symbol>
<symbol id="nob" viewBox="0 0 14 18"><path d="M2.500 2v14h3V2zM6.500 4h2M2.500 9l6 0" fill="none" stroke="#666"/><path d="M9 7l4 5M13 7l-4 5" stroke="#666"/></symbol>
<symbol id="acs" viewBox="0 0 18 18"><path d="M7 3a6 6 0 1 0 4 10" fill="none" stroke="#666"/><path d="M6 7l9 9M15 7l-9 9" stroke="#444" stroke-width="1.600"/></symbol>
</svg>

<div class="screen d-flex flex-column">
<div class="wins d-flex">

<section class="xl d-flex flex-column">
 <div class="xttl d-flex align-items-center">
  <span class="xarr">➔</span><svg class="cr xcr ml8"><use href="#cr"/></svg>
  <svg class="w7 ml14" viewBox="0 0 8 10"><use href="#qat"/></svg>
  <span class="ttl-t text-center">附件5：2025年二级物资集中采购物联网建设38大类PLC和RTU控制系统（JC2025-WⅡ-38-02WLW包）项目综合评分细则 - Excel</span>
  <span class="login">登录</span>
  <span class="ctrl ml8"><svg><use href="#opt"/></svg></span>
  <span class="ctrl"><svg><use href="#min"/></svg></span>
  <span class="ctrl"><svg><use href="#max"/></svg></span>
  <span class="ctrl"><svg><use href="#cls"/></svg></span>
 </div>
 <div class="xtab d-flex align-items-center">
  <div class="d-flex xt-row flex-grow-1">
   <span class="xon"></span><span>插入</span><span>页面布局</span><span>公式</span><span>数据</span><span>审阅</span><span>视图</span><span>帮助</span><span>Acrobat</span>
   <span class="d-flex align-items-center gap-2"><svg class="bulb"><use href="#blb"/></svg><span>操作说明搜索</span></span>
   <svg class="cmt cmt-x"><use href="#cmt"/></svg>
  </div>
 </div>
 <div class="rb d-flex">
  <div class="rg xg0"></div>
  <div class="rg xg1">
   <div class="rb-b">
    <div class="rw">
     <div class="box w172 ml8 serif"><span>宋体</span><svg class="cr"><use href="#cr"/></svg></div>
     <div class="box w40 serif ml2"><span>11</span><svg class="cr"><use href="#cr"/></svg></div>
     <span class="ib w14 ml6"><span class="biga">A</span><span class="tri">▲</span></span>
     <span class="ib w14 ml8"><span class="sma">A</span><span class="tri triv">▼</span></span>
    </div>
    <div class="rw">
     <span class="ib w24 ml6 fw-bold serif">B</span><span class="ib w24 fst-italic serif">I</span><span class="ib w24 text-decoration-underline serif">U</span><svg class="cr"><use href="#cr"/></svg>
     <span class="vs ml8"></span><svg class="i14 ml6"><use href="#brd"/></svg><svg class="cr ml6"><use href="#cr"/></svg>
     <span class="vs ml8"></span><svg class="i16 ml6"><use href="#fil"/></svg><svg class="cr"><use href="#cr"/></svg>
     <svg class="i16 ml14"><use href="#fca"/></svg><svg class="cr"><use href="#cr"/></svg>
     <span class="vs ml8"></span>
     <span class="ib w22 ml6 serif stk10"><span>wén</span><span class="wz">文</span></span><svg class="cr"><use href="#cr"/></svg>
    </div>
   </div>
   <div class="rb-l">字体<svg class="launch"><use href="#lc"/></svg></div>
  </div>
  <div class="rg xg2">
   <div class="rb-b">
    <div class="rw">
     <svg class="i16 ml10"><use href="#vt"/></svg>
     <span class="ib w24 hl ml4"><svg class="i16"><use href="#vm"/></svg></span>
     <svg class="i16"><use href="#vb"/></svg>
     <span class="vs ml8"></span>
     <svg class="i16 ml2"><use href="#ori"/></svg><svg class="cr"><use href="#cr"/></svg>
     <span class="vs ml8"></span>
     <div class="box w76 hl wrap-on ml6"><span class="serif abc9">ab<br>c</span><span>自动换行</span></div>
    </div>
    <div class="rw">
     <span class="ib w24 hl ml8"><svg class="i16"><use href="#al"/></svg></span>
     <svg class="i16 ml4"><use href="#ac"/></svg>
     <svg class="i16 ml6"><use href="#ar"/></svg>
     <span class="vs ml5"></span>
     <svg class="i16"><use href="#od"/></svg><svg class="i16 ml5"><use href="#oi"/></svg>
     <span class="vs"></span>
     <svg class="i16"><use href="#mrg"/></svg><span class="lb">合并后居中</span><svg class="cr ml10"><use href="#cr"/></svg>
    </div>
   </div>
   <div class="rb-l">对齐方式<svg class="launch"><use href="#lc"/></svg></div>
  </div>
  <div class="rg xg3">
   <div class="rb-b">
    <div class="rw"><div class="box w140 ml8 serif"><span>常规</span><svg class="cr"><use href="#cr"/></svg></div></div>
    <div class="rw">
     <svg class="i16 ml10"><use href="#acc"/></svg><svg class="cr"><use href="#cr"/></svg>
     <span class="ib w22 ml8">%</span><span class="ib w14 fw-bold">,</span>
     <span class="vs"></span>
     <span class="ib w26 serif stk9">←.0<br>.00</span>
     <span class="ib w26 serif stk9">.00<br>→.0</span>
    </div>
   </div>
   <div class="rb-l">数字<svg class="launch"><use href="#lc"/></svg></div>
  </div>
  <div class="rg xg4">
   <div class="rb-c">
    <div class="bb w60 ml5"><svg class="i32"><use href="#cfm"/></svg>条件格式<svg class="cr"><use href="#cr"/></svg></div>
    <div class="bb w60"><svg class="i32"><use href="#tfm"/></svg>套用<span>表格格式 <svg class="cr cr0"><use href="#cr"/></svg></span></div>
    <div class="bb w60"><svg class="i32"><use href="#csm"/></svg>单元格样式<svg class="cr"><use href="#cr"/></svg></div>
   </div>
   <div class="rb-l">样式</div>
  </div>
  <div class="rg xg5">
   <div class="rb-c">
    <div class="bb w40 ml10"><svg class="i32"><use href="#cin"/></svg>插入<svg class="cr"><use href="#cr"/></svg></div>
    <div class="bb w40"><svg class="i32"><use href="#cdl"/></svg>删除<svg class="cr"><use href="#cr"/></svg></div>
    <div class="bb w46"><svg class="i32"><use href="#cft"/></svg>格式<svg class="cr"><use href="#cr"/></svg></div>
   </div>
   <div class="rb-l">单元格</div>
  </div>
  <div class="rg xg6">
   <div class="rb-c">
    <div class="w34 d-flex flex-column align-items-center ml4">
     <span class="ib sg">Σ<svg class="cr"><use href="#cr"/></svg></span>
     <span class="ib dnb">↓<svg class="cr"><use href="#cr"/></svg></span>
     <span class="ib"><svg class="i16"><use href="#era"/></svg><svg class="cr"><use href="#cr"/></svg></span>
    </div>
    <div class="bb w72 ml5"><svg class="i32"><use href="#srt"/></svg>排序和筛选<svg class="cr"><use href="#cr"/></svg></div>
    <div class="bb w60 ml6"><svg class="i32"><use href="#fnd"/></svg>查找和选择<svg class="cr"><use href="#cr"/></svg></div>
   </div>
   <div class="rb-l">编辑</div>
  </div>
  <div class="rg xg7">
   <div class="rb-c justify-content-center"><div class="bb"><svg class="i14 h33" viewBox="0 0 12 20"><use href="#dot"/></svg>加<br>载项</div></div>
   <div class="rb-l">加载项</div>
  </div>
  <svg class="coll"><use href="#up"/></svg>
 </div>
 <div class="fbar d-flex">
  <div class="nmb">▾</div>
  <div class="dots">⋮</div>
  <div class="fx3 d-flex align-items-center justify-content-center"><span>✕</span><span>✓</span><span class="fst-italic fxi">fx</span></div>
  <div class="fin">自验收合格之日起:整机质保期36个月不得分，48个月的得2分，60个月及以上的得3分。</div>
 </div>
 <div class="sheet d-flex">
  <div class="grid">
   <table class="gt">
    <colgroup><col class="c89"><col class="c82"><col class="c384"><col class="c62"><col class="c299"><col class="c61"><col class="c61"><col class="c61"><col class="c61"><col class="c61"><col class="c62"><col class="c55"></colgroup>
    <tr class="ch"><th>B</th><th>C</th><th>D</th><th>E</th><th>F</th><th>G</th><th>H</th><th>I</th><th>J</th><th>K</th><th>L</th><th>M</th></tr>
    <tr class="h19"><td colspan="12">附件5</td></tr>
    <tr class="h39"><td colspan="12" class="ttlc">2025年38大类（JC2025-WⅡ-38-02WLW包）物联网建设PLC和RTU控制系统招标项目综合评分细则</td></tr>
    <tr class="h28 bd hd"><td>评审条款</td><td>评审内容</td><td>评分标准</td><td>标准分值</td><td>评分依据</td><td class="z" colspan="7"></td></tr>
    <tr class="h39 bd"><td rowspan="2" class="ctr">标书质量</td><td rowspan="2" class="ctr">投标文件质量</td><td>图文流畅清晰得0.5分；图文不流畅不清晰得0分。</td><td class="ctr">0.5</td><td>投标文件</td><td class="g"></td><td class="g"></td><td class="g"></td><td class="g"></td><td class="g"></td><td class="g"></td><td class="g"></td></tr>
    <tr class="h39 bd"><td>电子投标文件的目录页码与相应投标内容页码进行关联，目录页码与内<br>容页码相对应的得0.5分，否则不得分。</td><td class="ctr">0.5</td><td>投标文件</td><td class="g"></td><td class="g"></td><td class="g"></td><td class="g"></td><td class="g"></td><td class="g"></td><td class="g"></td></tr>
    <tr class="h39 bd"><td class="ctr yc">银行资信</td><td class="ctr yc">银行资信</td><td class="yc">具有良好银行资信证明得1分，无银行资信证明不得分。</td><td class="ctr yc">1</td><td class="yc">以开标前三个月内银行出具的资信证明为准</td><td class="g"></td><td class="g"></td><td class="g"></td><td class="g"></td><td class="g"></td><td class="g"></td><td class="g"></td></tr>
    <tr class="h24 bd"><td rowspan="3" class="ctr yc">体系认证</td><td rowspan="3" class="ctr yc">管理体系认证</td><td class="yc">提供有效质量管理体系认证证书得1分，否则不得分。</td><td class="ctr yc">1</td><td rowspan="3" class="yc">附清晰的扫描件及查询网站（http://cx.cnca.cn）截<br>图，原件备查，体系认证范围应覆盖本标包产品。</td><td class="g"></td><td class="g"></td><td class="g"></td><td class="g"></td><td class="g"></td><td class="g"></td><td class="g"></td></tr>
    <tr class="h24 bd"><td class="yc">提供有效环境管理体系认证证书得1分，否则不得分。</td><td class="ctr yc">1</td><td class="g"></td><td class="g"></td><td class="g"></td><td class="g"></td><td class="g"></td><td class="g"></td><td class="g"></td></tr>
    <tr class="h24 bd"><td class="yc">提供有效健康安全职业管理体系认证证书得1分，否则不得分。</td><td class="ctr yc">1</td><td class="g"></td><td class="g"></td><td class="g"></td><td class="g"></td><td class="g"></td><td class="g"></td><td class="g"></td></tr>
    <tr class="h184 bd"><td class="ctr yc">销售业绩</td><td class="ctr yc">产品销售业绩</td><td class="yc">销售业绩得分=（有效投标人的销售业绩/所有有效投标人的最高销售业<br>绩）×6。结果保留两位小数。</td><td class="ctr yc">6</td><td class="yc">提供相近工况销售业绩明细表（信息包括：项目名称、<br>产品名称、业绩数量、合同签订时间、含税结算价格、<br>购置单位等）。<br>1、按照业绩明细表的项目顺序提供清晰的业绩合同扫描<br>件；<br>2、提供清晰的销售发票彩色扫描件、发票网页查询彩色<br>截图（发票扫描件和查询截图要排版在同一页，如因发<br>票时间大于查询时间，可只提供发票扫描件；<br>3、以上资料均需原件备查。<br>提供业绩的时间范围：2023年1月1日-投标截止日前30日<br>（合同签订日期与发票开具日期均必须在此时间范围<br>内，金额以发票金额为准）。</td><td class="gy"></td><td class="gy"></td><td class="z" colspan="5"></td></tr>
    <tr class="h66 bd"><td rowspan="2" class="ctr">产品质量及售后<br>服务承诺</td><td class="ctr">售后服务承诺</td><td>设有售后服务机构，有完善的专业的售后服务队伍及售后服务制度，提<br>供针对本项目的完善的售后服务方案，得1分，否则不得分。</td><td class="ctr">1</td><td>需提供售后服务机构地址及买卖或租赁合同，提供售后<br>人员列表，同时需提供相应人员开标当月前六个月（不<br>含当月）的社保缴费证明文件及用工合同原件扫描件，<br>原件备查。</td><td class="g"></td><td class="g"></td><td class="g"></td><td class="g"></td><td class="g"></td><td class="g"></td><td class="g"></td></tr>
    <tr class="h66 bd"><td class="ctr">质量保证</td><td>自验收合格之日起:整机质保期36个月不得分，48个月的得2分，60个月<br>及以上的得3分。</td><td class="ctr">3</td><td>投标文件要有质保期承诺函，质保期以技术规格书相关<br>要求计算。（中标人承诺的质保期在签订合同时写入合<br>同条款）</td><td class="g"></td><td class="g"></td><td class="g"></td><td class="g"></td><td class="g"></td><td class="g"></td><td class="g"></td></tr>
    <tr class="h45 bd"><td class="ctr">诚信情况</td><td class="ctr">失信扣分</td><td>失信扣分=商务分值（不含报价分值）*10%*失信积分/10。</td><td class="ctr">0</td><td>投标人失信分以中国石油招标投标网发布的失信行为信<br>息为准。</td><td class="g"></td><td class="g"></td><td class="g"></td><td class="g"></td><td class="g"></td><td class="g"></td><td class="g"></td></tr>
    <tr class="h38 bd"><td rowspan="4" class="ctr yc">研发能力</td><td class="ctr yc">研发中心</td><td class="yc">具有省级及以上研究院所（实验室）得2分，否则不得分。</td><td class="ctr yc">2</td><td class="yc">需提供组织机构图及研究院所（实验室）图片，资质证<br>明扫描件，代理商以制造商为准。</td><td class="g"></td><td class="g"></td><td class="g"></td><td class="g"></td><td class="g"></td><td class="g"></td><td class="g"></td></tr>
    <tr class="h41 bd"><td class="ctr yc">研发专利</td><td class="yc">提供与投标标包产品相关的国家专利，获得发明专利证书每项得0.5分，<br>此项满分3分。</td><td class="ctr yc">3</td><td class="yc">需提供专利证书原件扫描件，资质证明扫描件，代理商<br>以制造商为准。</td><td class="g"></td><td class="g"></td><td class="g"></td><td class="g"></td><td class="g"></td><td class="g"></td><td class="g"></td></tr>
    <tr class="h45 bd"><td class="ctr yc"></td><td class="yc"></td><td class="ctr yc"></td><td class="yc">需提供投标人的证书原件扫描件，投标文件中需提供由<br>&nbsp;<br>&nbsp;</td><td class="g"></td><td class="g"></td><td class="g"></td><td class="g"></td><td class="g"></td><td class="g"></td><td class="g"></td></tr>
    <tr class="h56 bd"><td class="yc"></td><td class="yc"></td><td class="yc"></td><td class="yc"></td><td class="g"></td><td class="g"></td><td class="g"></td><td class="g"></td><td class="g"></td><td class="g"></td><td class="g"></td></tr>
   </table>
   <div class="redx"></div>
  </div>
  <div class="vsb">▲</div>
 </div>
 <div class="stabs d-flex align-items-start">
  <div class="sh1">Sheet1</div>
  <div class="plus mt-1">+</div>
  <div class="hs mt-1">◂</div>
 </div>
 <div class="xst d-flex align-items-center">
  <span>功能: 调查</span>
  <span class="ms-auto d-flex align-items-center">
   <span class="vi"><svg class="i14"><use href="#vw2"/></svg></span><span class="vi"><svg class="i14"><use href="#vw1"/></svg></span><span class="vi"><svg class="i14"><use href="#vw3"/></svg></span>
   <span class="ib w7">-</span><span class="slid"></span><span class="ib w7">+</span><span class="pct">85%</span>
  </span>
 </div>
 <div class="xst2 d-flex align-items-center"><span class="red">.0</span><span> | 使用期限：2025年6月26日  |  所属机构：鑫晟宇  | </span><svg class="i14"><use href="#lok"/></svg><span> (27')</span></div>
</section>

<section class="np d-flex flex-column">
 <div class="npt d-flex align-items-center">
  <svg class="i14 npi"><use href="#npd"/></svg><span>*无标题 - 记事本</span>
  <span class="npctl d-flex justify-content-between align-items-center ms-auto">
   <svg class="i14" viewBox="0 0 12 12"><use href="#min"/></svg><svg class="i14" viewBox="0 0 12 12"><use href="#max"/></svg><svg class="i14" viewBox="0 0 12 12"><use href="#cls"/></svg>
  </span>
 </div>
 <div class="npm d-flex"><span>文件(F)</span><span>编辑(E)</span><span>格式(O)</span><span>查看(V)</span><span>帮助(H)</span></div>
 <div class="npb d-flex">
  <div class="npx"><pre>

二○二五年四月十日

技术标准：标包1详见附件4-1、标包2详见附件4-2。

质量要求：标包1详见附件4-1、标包2详见附件4-2。

交货地点：物资公司各储运公司、区域物资供应中心或用户指定
地点。

交货期：按指定时间(分批)送达。

服务要求：成交供应商按合同要求送货后，应提供相应的技术服
务，包括产品的正确使用、现场施工指导、废弃物处理方法及现
场提出的相关服务等内容。

标包1：20000元人民币

质保期：到货验收合格后36个月为准。

投标有效期  自投标截止日起至2026年12月31日

投标单位：沈阳泰源科技有限公司
联 系 人：王玮靖
联系电话：17640581086
传　 真：024-25810588
电子邮箱：13998726125@163.com
地　 址：沈阳经济技术开发区沧海路19-20号
编制日期：2025年04月21日</pre></div>
  <div class="nsb d-flex flex-column">
   <div class="nsb-u"><svg viewBox="0 0 10 8"><use href="#up"/></svg></div>
   <div class="nsb-t"></div>
   <div class="nsb-d"><svg viewBox="0 0 8 8"><use href="#cr"/></svg></div>
  </div>
 </div>
 <div class="nps d-flex"><span class="n1">第 29 行，第 17 列</span><span class="n2">100%</span><span class="n3">Windows (CRLF)</span><span class="n4">UTF-8</span></div>
 <div class="npu"><span>更新：2000-01-01 0:00:00</span></div>
</section>

<section class="wd d-flex flex-column">
 <div class="wttl d-flex align-items-center">
  <svg class="i14 ml22"><use href="#sav"/></svg>
  <svg class="i14 ml14"><use href="#und"/></svg><svg class="cr wcr"><use href="#cr"/></svg>
  <svg class="i14 ml14"><use href="#red"/></svg>
  <svg class="w7 ml14" viewBox="0 0 8 10"><use href="#qat"/></svg>
  <span class="ttl-t">沈阳泰源-投标文件-包1 - Word</span>
  <span class="login">登录</span>
  <span class="ctrl ml9"><svg><use href="#opt"/></svg></span>
  <span class="ctrl"><svg><use href="#min"/></svg></span>
  <span class="ctrl"><svg><use href="#rst"/></svg></span>
  <span class="ctrl"><svg><use href="#cls"/></svg></span>
 </div>
 <div class="wtab d-flex align-items-center">
  <div class="d-flex wt-row flex-grow-1">
   <span>文件</span><span class="won">开始</span><span>插入</span><span>设计</span><span>布局</span><span>引用</span><span>邮件</span><span>审阅</span><span>视图</span><span>帮助</span><span>Acrobat</span>
   <span class="d-flex align-items-center gap-2 ml2"><svg class="bulb"><use href="#blb"/></svg><span>操作说明搜索</span></span>
   <svg class="cmt cmt-x"><use href="#cmt"/></svg>
  </div>
 </div>
 <div class="rb wrb d-flex">
  <div class="rg wg0"></div>
  <div class="rg wg1">
   <div class="rb-c">
    <div class="bb ml10 w38"><svg class="psti"><use href="#pst"/></svg><span class="pstl">粘贴</span><svg class="cr"><use href="#cr"/></svg></div>
    <div class="d-flex flex-column ml8">
     <span class="ib justify-content-start gap-1 mute"><svg class="i16n"><use href="#cut"/></svg><span>剪切</span></span>
     <span class="ib justify-content-start gap-1 mute"><svg class="i14"><use href="#cpy"/></svg><span>复制</span></span>
     <span class="ib justify-content-start gap-1 dark"><svg class="i16"><use href="#fmp"/></svg><span>格式刷</span></span>
    </div>
   </div>
   <div class="rb-l">剪贴板<svg class="launch"><use href="#lc"/></svg></div>
  </div>
  <div class="rg wg2">
   <div class="rb-b">
    <div class="rw">
     <div class="box w107 ml8 serif"><span>宋体</span><svg class="cr"><use href="#cr"/></svg></div>
     <div class="box w46 serif ml2"><span>五号</span><svg class="cr"><use href="#cr"/></svg></div>
     <span class="ib w14 ml6"><span class="biga">A</span><span class="tri">▲</span></span>
     <span class="ib w14 ml8"><span class="sma">A</span><span class="tri triv">▼</span></span>
     <span class="vs ml6"></span>
     <span class="ib w16 sa15">Aa</span><svg class="cr ml5"><use href="#cr"/></svg>
     <span class="vs"></span><svg class="i16 ml6"><use href="#cla"/></svg>
     <span class="ib w22 serif stk10 ml3"><span>wén</span><span class="wz">文</span></span>
     <span class="ib abox ml4">A</span>
    </div>
    <div class="rw">
     <span class="ib hl w22 fw-bold serif ml8 f14">B</span><span class="ib w24 fst-italic serif f14">I</span><span class="ib w24 text-decoration-underline serif f14">U</span><svg class="cr"><use href="#cr"/></svg>
     <span class="ib w30 serif text-decoration-line-through ml8">abc</span>
     <span class="ib w22 fw-bold serif">x<sub>2</sub></span><span class="ib w22 fw-bold serif">x<sup>2</sup></span>
     <span class="vs"></span>
     <span class="ib w22 sa19">A</span><svg class="cr"><use href="#cr"/></svg>
     <svg class="i16 ml8"><use href="#hla"/></svg><svg class="cr"><use href="#cr"/></svg>
     <svg class="i16 ml14"><use href="#fca"/></svg><svg class="cr"><use href="#cr"/></svg>
     <span class="ib ml14 ga">A</span>
     <span class="ib ml8 zi">字</span>
    </div>
   </div>
   <div class="rb-l">字体<svg class="launch"><use href="#lc"/></svg></div>
  </div>
  <div class="rg wg3">
   <div class="rb-b">
    <div class="rw">
     <svg class="i16 ml10"><use href="#lst1"/></svg><svg class="cr"><use href="#cr"/></svg>
     <span class="ib hl ml6 w37 gap-1"><svg class="i16"><use href="#lst2"/></svg><svg class="cr"><use href="#cr"/></svg></span>
     <svg class="i16 ml4"><use href="#lst3"/></svg><svg class="cr"><use href="#cr"/></svg>
     <span class="vs ml4"></span>
     <svg class="i16"><use href="#od"/></svg><svg class="i16"><use href="#oi"/></svg>
     <span class="vs"></span><span class="ib w22 sa15">A</span><svg class="cr"><use href="#cr"/></svg>
     <span class="vs ml8"></span>
     <span class="ib w16 serif stk9 ml6"><span class="blu">A</span><span class="pur">Z</span></span><span class="ar13">↓</span>
     <span class="vs ml8"></span><span class="dj ml7">↵</span>
    </div>
    <div class="rw">
     <svg class="i16 ml10"><use href="#al"/></svg><svg class="i16 ml6"><use href="#ac"/></svg><svg class="i16 ml6"><use href="#ar"/></svg>
     <span class="ib hl w22 ml3"><svg class="i16"><use href="#aj"/></svg></span>
     <svg class="i16 ml4"><use href="#ad"/></svg>
     <span class="vs ml4"></span>
     <svg class="i16 ml4"><use href="#spc"/></svg><svg class="cr"><use href="#cr"/></svg>
     <span class="vs ml8"></span>
     <svg class="i16 ml10"><use href="#shd"/></svg><svg class="cr"><use href="#cr"/></svg>
     <svg class="i14 ml14"><use href="#brd"/></svg><svg class="cr ml5"><use href="#cr"/></svg>
    </div>
   </div>
   <div class="rb-l">段落<svg class="launch"><use href="#lc"/></svg></div>
  </div>
  <div class="rg wg4">
   <div class="d-flex flex-grow-1">
    <div class="gal">
     <div class="gi"><div class="gs">AaBbCcD</div><div class="gl">↲ 表内列...</div></div>
     <div class="gi"><div class="gs s13">AaBbCcDdE</div><div class="gl">表内正文</div></div>
     <div class="gi"><div class="gs s13 text-secondary">AaBbCcDdEe</div><div class="gl">表内左两...</div></div>
     <div class="gi"><div class="gs s13">AaBbCcDdE</div><div class="gl">纯文本</div></div>
     <div class="gi"><div class="gs s24">AaBbC</div><div class="gl">节标题</div></div>
     <div class="gi"><div class="gs s18">AaBbCc</div><div class="gl">投标文件...</div></div>
     <div class="gi"><div class="gs s13">AaBbCcDdE</div><div class="gl">↲ 正文</div></div>
     <div class="gi"><div class="gs s13">AaBbCcDdE</div><div class="gl">↲ 无间隔</div></div>
     <div class="gi"><div class="gs s20">一&nbsp;&nbsp;Aa</div><div class="gl">标题 1</div></div>
     <div class="gi"><div class="gs s20">1&nbsp;&nbsp;&nbsp;AaI</div><div class="gl">标题 2</div></div>
     <div class="gi"><div class="gs s20">1.1&nbsp;&nbsp;Aa</div><div class="gl">标题 3</div></div>
     <div class="gi"><div class="gs s20">1.1.1</div><div class="gl">标题 4</div></div>
    </div>
    <div class="gm"><svg class="cr"><use href="#cr"/></svg></div>
   </div>
   <div class="rb-l">样式<svg class="launch"><use href="#lc"/></svg></div>
  </div>
  <div class="rg wg5">
   <div class="rb-b rb-t">
    <span class="ib justify-content-start gap-1 ml10"><svg class="i14"><use href="#mag"/></svg><span>查找</span><svg class="cr ml14"><use href="#cr"/></svg></span>
    <span class="ib justify-content-start gap-1 ml10"><svg class="i14"><use href="#rp"/></svg><span>替换</span></span>
    <span class="ib justify-content-start gap-1 ml10"><svg class="i14" viewBox="0 0 12 18"><use href="#ptr"/></svg><span>选择</span><svg class="cr"><use href="#cr"/></svg></span>
   </div>
   <div class="rb-l">编辑</div>
  </div>
  <div class="rg wg6">
   <div class="rb-c justify-content-center"><div class="bb"><svg class="i14 h33" viewBox="0 0 12 20"><use href="#dot"/></svg>加<br>载项</div></div>
   <div class="rb-l">加载项</div>
  </div>
  <svg class="coll"><use href="#up"/></svg>
 </div>
 <div class="wmain d-flex">
  <aside class="pane">
   <div class="ptitle d-flex justify-content-between align-items-center">
    <span>导航</span><span class="d-flex align-items-center gap-4"><svg class="i14"><use href="#cr"/></svg><svg class="i14" viewBox="0 0 12 12"><use href="#cls"/></svg></span>
   </div>
   <div class="psearch d-flex align-items-center justify-content-between"><span>在文档中搜索</span><span class="d-flex align-items-center"><svg class="i14"><use href="#mag"/></svg><svg class="cr"><use href="#cr"/></svg></span></div>
   <div class="ptabs d-flex"><span class="pon">标题</span><span>页面</span><span>结果</span></div>
   <div class="tree">
    <div class="tn l1"><span class="tg">◢</span>5 技术评分响应资料</div>
    <div class="tn l2"><span class="tg">◢</span>5.1 研发能力</div>
    <div class="tn l3"><span class="tg"></span>5.1.1 研发中心</div>
    <div class="tn l3"><span class="tg"></span>5.1.2 研发专利</div>
    <div class="tn l3"><span class="tg"></span>5.1.3 软件著作权登记证书</div>
    <div class="tn l3"><span class="tg"></span>5.1.4 人员实力</div>
    <div class="tn l2"><span class="tg">◢</span>5.2 质量管控能力</div>
    <div class="tn l3"><span class="tg"></span>5.2.1 专职检验检测</div>
    <div class="tn l3"><span class="tg"></span>5.2.2 质量过程控制资料</div>
    <div class="tn l2"><span class="tg">◢</span>5.3 生产检测能力</div>
    <div class="tn l3"><span class="tg"></span>5.3.1 生产能力</div>
    <div class="tn l3"><span class="tg"></span>5.3.2 生产工艺</div>
    <div class="tn l3"><span class="tg"></span>5.3.3 检测能力</div>
    <div class="tn l0"><span class="tg">◢</span>三 商务投标文件</div>
    <div class="tn l1"><span class="tg"></span>1 商务条款响应/偏离表</div>
    <div class="tn l1"><span class="tg"></span>2 法律纠纷情况</div>
    <div class="tn l1"><span class="tg"></span>3 机密信息接受承诺函</div>
    <div class="tn l1"><span class="tg"></span>4 投标人告知承诺函</div>
    <div class="tn l1"><span class="tg"></span>5 投标人自律守则</div>
    <div class="tn l1"><span class="tg">◢</span>6 商务评分响应资料</div>
    <div class="tn l2"><span class="tg"></span>6.1 银行资信</div>
    <div class="tn l2"><span class="tg">◢</span>6.2 体系认证</div>
    <div class="tn l3"><span class="tg"></span>6.2.1 质量管理体系认证...</div>
    <div class="tn l3"><span class="tg"></span>6.2.2 环境管理体系认证...</div>
    <div class="tn l3"><span class="tg"></span>6.2.3 健康安全职业管理...</div>
    <div class="tn l2"><span class="tg"></span>6.3 销售业绩</div>
    <div class="tn l2"><span class="tg">◢</span>6.4 产品质量及售后服务承诺</div>
    <div class="tn l3"><span class="tg">◢</span>6.4.1 售后服务承诺</div>
    <div class="tn l4"><span class="tg"></span>6.4.1.1 售后服务机构...</div>
    <div class="tn l4"><span class="tg"></span>6.4.1.2 售后服务组织...</div>
    <div class="tn l4"><span class="tg"></span><span class="nsel">6.4.1.3 售后人员列表</span></div>
    <div class="tn l4"><span class="tg"></span>6.4.1.4 相关制度文本</div>
    <div class="tn l3"><span class="tg"></span>6.4.2 质量保证</div>
    <div class="tn l2"><span class="tg"></span>6.5 诚信情况</div>
   </div>
  </aside>
  <div class="dmain">
   <div class="rstrip d-flex">
    <div class="cbox">⌞</div>
    <div class="hrul"><svg class="indm"><use href="#hg"/></svg><svg class="indr"><use href="#rt"/></svg><span>8</span><span>6</span><span>4</span><span>2</span><span></span><span>2</span><span>4</span><span>6</span><span>8</span><span>10</span><span>12</span><span>14</span><span>16</span><span>18</span><span>20</span><span>22</span><span>24</span><span>26</span><span>28</span><span>30</span><span>32</span><span>34</span><span>36</span><span>38</span><span>40</span><span>42</span><span>44</span><span>46</span></div>
   </div>
   <div class="dbody d-flex">
    <div class="vrul"><span></span><span>2</span><span>4</span><span>6</span><span>8</span><span>10</span><span>12</span><span>14</span><span>16</span><span>18</span><span>20</span><span>22</span><span>24</span><span>26</span><span>28</span><span>30</span><span>32</span></div>
    <div class="page">
     <div class="phd"><span>沈阳泰源科技有限公司</span><span class="phr">投标文件<i class="pm">↵</i></span></div>
     <div class="phb"><i class="g1"></i><i class="g2"></i></div>
     <div class="phl"></div>
     <div class="hh">▪6.4.1.3 <span class="sq">售后人员列表</span><i class="pm">↵</i></div>
     <div class="pml"><i class="pm">↵</i></div>
     <div class="rbx">
      <table class="wt">
       <colgroup><col class="d72"><col class="d106"><col class="d82"><col class="d114"><col class="d176"><col class="d125"><col class="d16"></colgroup>
       <tr class="hb"><td><span class="sq">序号</span><i class="pm">↵</i></td><td>姓&nbsp;&nbsp;名<i class="pm">↵</i></td><td><span class="sq">性别</span><i class="pm">↵</i></td><td><span class="sq">专业</span><i class="pm">↵</i></td><td><span class="sq">职称或技能等级</span><i class="pm">↵</i></td><td><span class="sq">职务</span><i class="pm">↵</i></td><td class="mk"><i class="pm">↵</i></td></tr>
       <tr><td>1<i class="pm">↵</i></td><td><span class="sq">刘思宇</span><i class="pm">↵</i></td><td>女<i class="pm">↵</i></td><td><span class="sq">管理</span><i class="pm">↵</i></td><td><span class="sq">工程师</span><i class="pm">↵</i></td><td><span class="sq">部长</span><i class="pm">↵</i></td><td class="mk"><i class="pm">↵</i></td></tr>
       <tr><td><i class="pm">↵</i></td><td><span class="sb">季宗庆</span><i class="pm">↵</i></td><td><i class="pm">↵</i></td><td><i class="pm">↵</i></td><td><i class="pm">↵</i></td><td><i class="pm">↵</i></td><td class="mk"><i class="pm">↵</i></td></tr>
       <tr><td><i class="pm">↵</i></td><td>陈忠伟<i class="pm">↵</i></td><td><i class="pm">↵</i></td><td><i class="pm">↵</i></td><td><i class="pm">↵</i></td><td><i class="pm">↵</i></td><td class="mk"><i class="pm">↵</i></td></tr>
       <tr><td><i class="pm">↵</i></td><td><i class="pm">↵</i></td><td><i class="pm">↵</i></td><td><i class="pm">↵</i></td><td><i class="pm">↵</i></td><td><i class="pm">↵</i></td><td class="mk"><i class="pm">↵</i></td></tr>
       <tr><td>2<i class="pm">↵</i></td><td><span class="sq">王玮靖</span><i class="pm">↵</i></td><td>男<i class="pm">↵</i></td><td><span class="sq">自动化</span><i class="pm">↵</i></td><td><span class="sq">助理工程师</span><i class="pm">↵</i></td><td><span class="sq">售后工程师</span><i class="pm">↵</i></td><td class="mk"><i class="pm">↵</i></td></tr>
       <tr><td>3<i class="pm">↵</i></td><td><span class="sq">马静</span><i class="pm">↵</i></td><td>男<i class="pm">↵</i></td><td><span class="sq">电焊</span><i class="pm">↵</i></td><td><span class="sq">技工</span><i class="pm">↵</i></td><td><span class="sq">客服经理</span><i class="pm">↵</i></td><td class="mk"><i class="pm">↵</i></td></tr>
       <tr><td>4<i class="pm">↵</i></td><td><span class="sq">宫海龙</span><i class="pm">↵</i></td><td>男<i class="pm">↵</i></td><td><span class="sq">电工</span><i class="pm">↵</i></td><td><span class="sq">技工</span><i class="pm">↵</i></td><td><span class="sq">维修员</span><i class="pm">↵</i></td><td class="mk"><i class="pm">↵</i></td></tr>
       <tr><td>5<i class="pm">↵</i></td><td><span class="sq">董立新</span><i class="pm">↵</i></td><td>男<i class="pm">↵</i></td><td><span class="sq">电工</span><i class="pm">↵</i></td><td><span class="sq">技工</span><i class="pm">↵</i></td><td><span class="sq">维修员</span><i class="pm">↵</i></td><td class="mk"><i class="pm">↵</i></td></tr>
       <tr><td>6<i class="pm">↵</i></td><td><span class="sq">刘东君</span><i class="pm">↵</i></td><td>男<i class="pm">↵</i></td><td><span class="sq">电工</span><i class="pm">↵</i></td><td><span class="sq">技工</span><i class="pm">↵</i></td><td><span class="sq">维修员</span><i class="pm">↵</i></td><td class="mk"><i class="pm">↵</i></td></tr>
       <tr><td>7<i class="pm">↵</i></td><td><span class="sq">赵鑫</span><i class="pm">↵</i></td><td>男<i class="pm">↵</i></td><td>/<i class="pm">↵</i></td><td><span class="sq">普工</span><i class="pm">↵</i></td><td><span class="sq">库房材料员</span><i class="pm">↵</i></td><td class="mk"><i class="pm">↵</i></td></tr>
       <tr><td>8<i class="pm">↵</i></td><td><span class="sq">王俊华</span><i class="pm">↵</i></td><td>女<i class="pm">↵</i></td><td>/<i class="pm">↵</i></td><td><span class="sq">普工</span><i class="pm">↵</i></td><td><span class="sq">话务员</span><i class="pm">↵</i></td><td class="mk"><i class="pm">↵</i></td></tr>
      </table>
      <div class="bl"><i class="pm">↵</i></div>
      <div class="bl"><i class="pm">↵</i></div>
     </div>
     <div class="lst"><i class="pm">↵</i></div>
    </div>
   </div>
  </div>
 </div>
 <div class="wst d-flex align-items-center">
  <span class="ml13">第 125 页，共 128 页</span><span class="ml20">12058 个字</span>
  <svg class="i14 ml19" viewBox="0 0 14 18"><use href="#nob"/></svg>
  <span class="ml18">英语(美国)</span>
  <svg class="i14 ml66" viewBox="0 0 18 18"><use href="#acs"/></svg><span class="ml4 wacc">辅助功能: 调查</span>
  <span class="ms-auto d-flex align-items-center">
   <svg class="i14"><use href="#vw1"/></svg>
   <span class="vsel ml12"><svg class="i14"><use href="#vw2"/></svg></span>
   <svg class="i14 ml13"><use href="#vw3"/></svg>
   <span class="ml14">-</span><span class="sld2"><i></i></span><span>+</span><span class="wpc">111%</span>
  </span>
 </div>
</section>
</div>
<div class="tbar d-flex"><span class="tb-o m196"></span><span class="tb-g m540"></span><span class="tb-o m1285"></span><span class="tb-g m540"></span></div>
<div class="wlm"><b>激活 Windows</b>转到“设置”以激活 Windows。</div>
</div>
</body>
</html>
